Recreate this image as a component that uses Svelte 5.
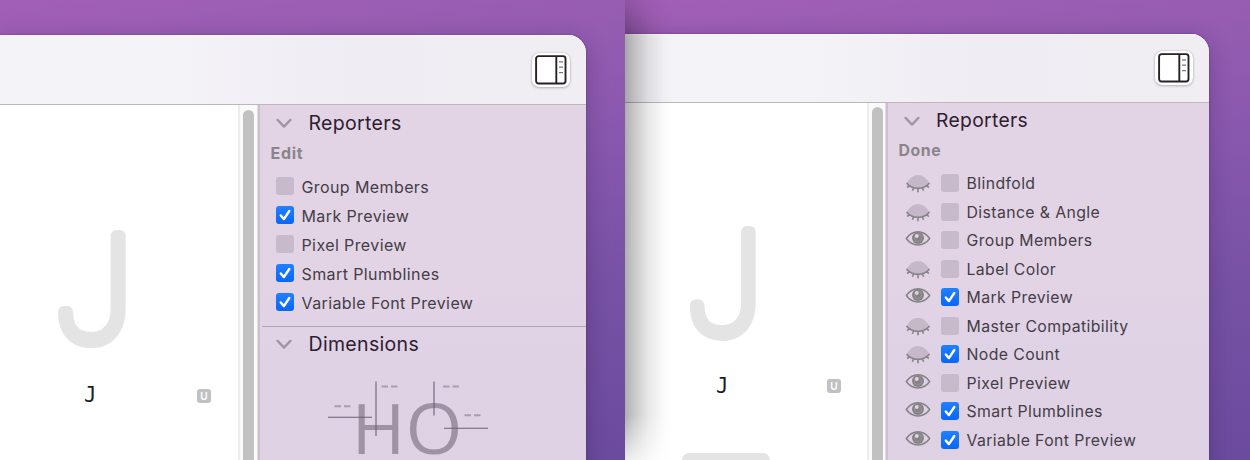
<script>
  const left = [
    ['Group Members', false],
    ['Mark Preview', true],
    ['Pixel Preview', false],
    ['Smart Plumblines', true],
    ['Variable Font Preview', true]
  ].map(([name, on]) => ({ name, on }));

  const right = [
    ['Blindfold', false, false],
    ['Distance & Angle', false, false],
    ['Group Members', false, true],
    ['Label Color', false, false],
    ['Mark Preview', true, true],
    ['Master Compatibility', false, false],
    ['Node Count', true, false],
    ['Pixel Preview', false, true],
    ['Smart Plumblines', true, true],
    ['Variable Font Preview', true, true]
  ].map(([name, on, visible]) => ({ name, on, visible }));
</script>

{#snippet checkbox(on)}
  <span class="box" class:on>
    {#if on}
      <svg viewBox="0 0 18 18" width="18" height="18"><path d="M4.8 9.5 7.9 13.1 13.3 5" /></svg>
    {/if}
  </span>
{/snippet}

{#snippet eye(open)}
  <svg class="eye" viewBox="0 0 26 20" width="26" height="20">
    {#if open}
      <path d="M1.3 8.5C7.5 -.6 18.5 -.6 24.7 8.5C18.5 17.1 7.5 17.1 1.3 8.5Z" fill="none" stroke="#858285" stroke-width="1.5" stroke-linejoin="round" />
      <circle cx="13" cy="8" r="6" fill="#858285" />
      <circle cx="13" cy="8" r="3.6" fill="none" stroke="#a39ba5" stroke-width="0.7" />
      <circle cx="11.8" cy="6" r="1.9" fill="#e0d3e4" />
    {:else}
      <path d="M1.5 10.2C7.8 -.9 18.2 -.9 24.5 10.2C18.5 17.3 7.5 17.3 1.5 10.2Z" fill="#c5b9c9" />
      <path d="M1.5 10C7.5 17.2 18.5 17.2 24.5 10M4.4 12.3 2.2 14.6M8.7 14.6 7.4 17.8M13 15.4V19.2M17.3 14.6 18.6 17.8M21.6 12.3 23.8 14.6" fill="none" stroke="#878388" stroke-width="1.6" />
    {/if}
  </svg>
{/snippet}

{#snippet heading(title)}
  <div class="heading">
    <svg width="16" height="11" viewBox="0 0 16 11"><path d="M1.6 1.9 8 8.6 14.4 1.9" /></svg>
    <h2>{title}</h2>
  </div>
{/snippet}

{#snippet preview()}
  <div class="canvas">
    <svg class="glyph" viewBox="0 0 80 130" width="80" height="130">
      <text x="0" y="0" transform="translate(3.7 117.5) scale(.945 1.01)">J</text>
    </svg>
    <div class="label"><span>J</span><b>U</b></div>
    <div class="next"></div>
  </div>
  <div class="track"><i></i></div>
{/snippet}

{#snippet toolbar()}
  <header>
    <button aria-label="Toggle sidebar">
      <svg width="32" height="30" viewBox="0 0 32 30">
        <rect x="1.1" y="1.1" width="29.4" height="27.4" rx="2.5" />
        <path d="M21.3 1V28.5" />
        <path class="ticks" d="M24 6.9h4M24 12.2h4M24 17.6h4" />
      </svg>
    </button>
  </header>
{/snippet}

<main>
  <section class="shot first">
    <div class="window">
      {@render toolbar()}
      <div class="body">
        {@render preview()}
        <aside>
          {@render heading('Reporters')}
          <div class="action">Edit</div>
          <ul>
            {#each left as r}
              <li>{@render checkbox(r.on)}<span class="name">{r.name}</span></li>
            {/each}
          </ul>
          <div class="dimensions">
            {@render heading('Dimensions')}
            <svg class="metrics" width="180" height="90" viewBox="0 0 180 90">
              <g class="letters">
                <text x="24.5" y="77" textLength="54" lengthAdjust="spacingAndGlyphs">H</text>
                <text x="78.5" y="77" textLength="57" lengthAdjust="spacingAndGlyphs">O</text>
              </g>
              <path class="lines" d="M49 4.5V59M107 4.5V38.5M1 40.3H45M117 51.3H161" />
              <path class="dashes" d="M54.5 9.5h6.5M64 9.5h6.5M116 9.5h6.5M125.5 9.5h6.5M7.5 29.3h6.5M17 29.3h6.5M137.5 38.3h6.5M147 38.3h6.5" />
            </svg>
          </div>
        </aside>
      </div>
    </div>
  </section>
  <section class="shot second">
    <div class="window">
      {@render toolbar()}
      <div class="body">
        {@render preview()}
        <aside>
          {@render heading('Reporters')}
          <div class="action">Done</div>
          <ul>
            {#each right as r}
              <li>{@render eye(r.visible)}{@render checkbox(r.on)}<span class="name">{r.name}</span></li>
            {/each}
          </ul>
        </aside>
      </div>
    </div>
    <div class="shade"></div>
  </section>
</main>

<style>
  :global(body) { margin: 0; overflow: hidden; }
  main { display: flex; width: 1250px; height: 460px; overflow: hidden; font-family: Inter, "Liberation Sans", sans-serif; }
  .shot {
    position: relative; box-sizing: border-box; width: 625px; height: 460px; overflow: hidden;
    background: linear-gradient(172deg, #a25fb8 0%, #975db2 16%, #8b59af 36%, #7852a5 65%, #6b4b9e 100%);
  }
  .first { padding-top: 35px; }
  .second { padding-top: 34px; }
  .window {
    width: 586px; height: 470px; border-radius: 0 18px 0 0; overflow: hidden;
    background: #fff; box-shadow: 0 0 2px #4d285b99, 0 5px 22px #2b104048;
  }
  .second .window { width: 584px; }
  header {
    box-sizing: border-box; display: flex; align-items: center; justify-content: flex-end;
    height: 70px; padding-right: 16px; border-bottom: 1px solid #bfb5c1;
    box-shadow: inset 0 1px #fbf9fc; background: linear-gradient(90deg, #f4f3f8 0 30%, #efecf3 60%, #f0edf3);
  }
  .second header { height: 69px; background: linear-gradient(90deg, #f4f4f8 0 30%, #efecf3 60%, #f0edf3); }
  button {
    display: grid; place-items: center; width: 38px; height: 34px; padding: 0; border: 0; border-radius: 7px;
    background: #fff; box-shadow: 0 0 2px #0003, 0 1px 3px #0003;
  }
  button svg { fill: #fff; stroke: #242226; stroke-width: 1.9; }
  button .ticks { stroke: #777; stroke-width: 1.2; }
  .body { display: flex; height: 400px; }
  .canvas { width: 238px; flex: none; }
  .second .canvas { width: 242px; }
  .glyph { display: block; overflow: visible; margin: 118px 0 0 54px; }
  .second .glyph { margin: 116px 0 1px 61px; width: 78px; height: 127px; }
  .glyph text { font: 100 145px Roboto; fill: #e4e4e4; stroke: #e4e4e4; stroke-width: 12; stroke-linejoin: round; }
  .label { display: flex; align-items: center; height: 24px; margin: 31px 0 0 84px; }
  .label span { width: 113px; font: 20.5px/20px "DejaVu Sans Mono", monospace; color: #1d1d1d; padding-bottom: 2px; }
  .label b { width: 14px; height: 14px; border-radius: 3px; background: #c1c1c1; color: #fff; font: 600 10px/14px Inter; text-align: center; }
  .second .label { margin: 28px 0 0 91px; }
  .second .label span { width: 111px; padding-bottom: 0; }
  .next { display: none; }
  .second .next { display: block; width: 88px; height: 20px; margin: 55px 0 0 57px; border-radius: 7px; background: #e4e4e4; }
  .track { box-sizing: border-box; width: 20px; flex: none; padding: 5px 3px 0 3px; background: #fafafa; border-left: 2px solid #ececec; border-right: 1px solid #dedede; }
  .second .track { width: 19px; padding-top: 4px; }
  .track i { display: block; width: 11px; height: 400px; border-radius: 6px; background: #c1c1c1; }
  aside { flex: 1; min-width: 0; background: linear-gradient(#e2d4e4, #e2d4e5 45%, #dfd2e5 65%, #ded1e4); border-left: 2px solid #cdbfd1; }
  .heading { display: flex; align-items: center; height: 35px; padding-left: 16px; gap: 16.5px; }
  .heading svg { margin-top: 2px; fill: none; stroke: #a094a5; stroke-width: 2.3; stroke-linecap: round; stroke-linejoin: round; }
  h2 { margin: 0; font-size: 19.5px; font-weight: 400; letter-spacing: .33px; color: #2d2030; }
  .action { height: 26px; padding-left: 10.5px; font-size: 16px; line-height: 26px; font-weight: 700; letter-spacing: .7px; color: #8a858c; }
  ul { margin: 6px 0 0; padding: 0 0 0 16px; list-style: none; }
  li { display: flex; align-items: center; height: 29px; color: #443d47; font-size: 16px; letter-spacing: .4px; }
  .box { position: relative; top: -.7px; width: 18px; height: 18px; border-radius: 3px; background: #c7bacb; margin-right: 7.5px; flex: none; }
  .box.on { background: linear-gradient(#2280ff, #0866fb); }
  .box svg { display: block; fill: none; stroke: #fff; stroke-width: 2.4; stroke-linecap: round; stroke-linejoin: round; }
  .dimensions { margin: 9px 0 0 2px; border-top: 1px solid #b3a5b7; }
  .dimensions .heading { height: 33px; padding-left: 14px; }
  .metrics { display: block; overflow: visible; margin: 17px 0 0 65px; }
  .letters { font: 70px "Open Sans"; fill: #9e92a4; }
  .lines { fill: none; stroke: #6e6075; stroke-width: 1.1; }
  .dashes { fill: none; stroke: #a99db0; stroke-width: 2; }
  .second .heading { height: 34px; gap: 16px; }
  .second h2 { font-size: 19.3px; }
  .second .action { font-size: 15.8px; line-height: 27px; letter-spacing: .6px; }
  .second ul { margin-top: 6.5px; padding-left: 17px; }
  .second li { height: 28.5px; font-size: 15.8px; }
  .second .box { margin-left: 10px; }
  .eye { position: relative; top: -.5px; flex: none; }
  .shade { position: absolute; inset: 0 auto 0 0; width: 48px; background: linear-gradient(90deg, #00000052, #00000038 18%, #00000018 48%, #00000005 80%, transparent); mask: linear-gradient(#0005, #000 40px, #000 415px, transparent 475px); }
</style>
